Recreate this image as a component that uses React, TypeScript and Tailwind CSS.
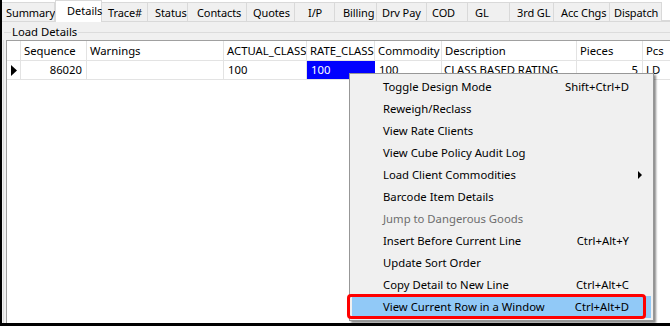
import React from "react";

const tabs = [
  { label: "Summary", w: 53, pl: 4 },
  { label: "Details", w: 47, pl: 11, sel: true },
  { label: "Trace#", w: 46, pl: 6 },
  { label: "Status", w: 40, pl: 7 },
  { label: "Contacts", w: 59, pl: 9 },
  { label: "Quotes", w: 48, pl: 6 },
  { label: "I/P", w: 40, pl: 13 },
  { label: "Billing", w: 42, pl: 8 },
  { label: "Drv Pay", w: 50, pl: 5 },
  { label: "COD", w: 41, pl: 5 },
  { label: "GL", w: 42, pl: 7 },
  { label: "3rd GL", w: 44, pl: 7 },
  { label: "Acc Chgs", w: 56, pl: 7 },
  { label: "Dispatch", w: 52, pl: 4 },
];

const cols = [
  { label: "", w: 14 },
  { label: "Sequence", w: 66 },
  { label: "Warnings", w: 137 },
  { label: "ACTUAL_CLASS", w: 83 },
  { label: "RATE_CLASS", w: 68 },
  { label: "Commodity", w: 67 },
  { label: "Description", w: 135 },
  { label: "Pieces", w: 66 },
  { label: "Pcs", w: 40 },
];

const menu: { label: string; sc?: string; sub?: boolean; dis?: boolean; hl?: boolean }[] = [
  { label: "Toggle Design Mode", sc: "Shift+Ctrl+D" },
  { label: "Reweigh/Reclass" },
  { label: "View Rate Clients" },
  { label: "View Cube Policy Audit Log" },
  { label: "Load Client Commodities", sub: true },
  { label: "Barcode Item Details" },
  { label: "Jump to Dangerous Goods", dis: true },
  { label: "Insert Before Current Line", sc: "Ctrl+Alt+Y" },
  { label: "Update Sort Order" },
  { label: "Copy Detail to New Line", sc: "Ctrl+Alt+C" },
  { label: "View Current Row in a Window", sc: "Ctrl+Alt+D", hl: true },
];

export default function App() {
  return (
    <div
      className="relative w-[670px] h-[326px] overflow-hidden bg-white text-[11.3px] text-black"
      style={{ fontFamily: '"Noto Sans", "Open Sans", sans-serif' }}
    >
      <div className="flex h-full flex-col border-b-[3px] border-l-[2px] border-black">
        {/* tab strip */}
        <div className="flex h-[21px] shrink-0 items-end bg-white text-[11px]">
          {tabs.map((t) =>
            t.sel ? (
              <div
                key={t.label}
                className="relative z-10 -mb-px flex h-[22px] shrink-0 items-start whitespace-nowrap border-x border-t border-[#d9d9d9] bg-white pt-[3px] leading-[14px]"
                style={{ width: t.w, paddingLeft: t.pl }}
              >
                {t.label}
              </div>
            ) : (
              <div
                key={t.label}
                className="flex h-[19px] shrink-0 items-center whitespace-nowrap border-r border-t border-[#d9d9d9] bg-[#f0f0f0] pt-[1px] leading-[14px] tracking-[-0.1px]"
                style={{ width: t.w, paddingLeft: t.pl }}
              >
                {t.label}
              </div>
            )
          )}
          <div className="h-[19px] flex-1 border-b border-[#d9d9d9]" />
        </div>
        {/* group box */}
        <div className="flex flex-1 flex-col border-t border-[#d9d9d9] bg-[#f0f0f0] pl-[1px]">
          <div className="relative h-[18px] shrink-0">
            <div className="absolute left-[1px] right-0 top-[10px] border-t border-[#dcdcdc]" />
            <span className="absolute left-[8px] top-[3px] bg-[#f0f0f0] px-[1px] leading-[14px]">Load Details</span>
          </div>
          <div className="flex flex-1 border-l border-[#dcdcdc] pl-[2px]">
            <div className="flex flex-1 flex-col border-l border-t border-[#a0a0a0] bg-white">
              {/* header */}
              <div className="flex h-[20px] shrink-0 border-b border-[#e3e3e3]">
                {cols.map((c, i) => (
                  <div
                    key={i}
                    className="flex shrink-0 items-center overflow-hidden whitespace-nowrap border-r border-[#e3e3e3] pl-[3px] leading-[14px]"
                    style={{ width: c.w }}
                  >
                    {c.label}
                  </div>
                ))}
              </div>
              {/* row */}
              <div className="flex h-[19px] shrink-0 border-b border-[#e3e3e3]">
                <div className="flex w-[14px] shrink-0 items-center justify-center border-r border-[#e3e3e3]">
                  <svg width="6" height="11" viewBox="0 0 6 11">
                    <path d="M0 0 L6 5.5 L0 11 Z" fill="#000" />
                  </svg>
                </div>
                <div className="flex w-[66px] shrink-0 items-center justify-end border-r border-[#e3e3e3] pr-[4px]">86020</div>
                <div className="w-[137px] shrink-0 border-r border-[#e3e3e3]" />
                <div className="flex w-[83px] shrink-0 items-center border-r border-[#e3e3e3] pl-[4px]">100</div>
                <div className="flex w-[68px] shrink-0 items-center bg-[#0000ff] pl-[4px] text-white">100</div>
                <div className="flex w-[67px] shrink-0 items-center border-r border-[#e3e3e3] pl-[4px]">100</div>
                <div className="flex w-[135px] shrink-0 items-center overflow-hidden whitespace-nowrap border-r border-[#e3e3e3] pl-[2px]">CLASS BASED RATING</div>
                <div className="flex w-[66px] shrink-0 items-center justify-end border-r border-[#e3e3e3] pr-[4px]">5</div>
                <div className="flex w-[40px] shrink-0 items-center pl-[3px]">LD</div>
              </div>
            </div>
          </div>
        </div>
      </div>

      {/* context menu */}
      <div className="absolute left-[349px] top-[73px] w-[305px] border border-[#979797] bg-[#f0f0f0] py-[2px] shadow-[2px_2px_2px_rgba(0,0,0,0.45)]">
        {menu.map((m) => (
          <div
            key={m.label}
            className={`relative mx-[2px] flex h-[22px] items-center pl-[31px] pr-[22px] ${m.hl ? "bg-[#91c9f7]" : ""} ${m.dis ? "text-[#6d6d6d]" : ""}`}
          >
            <span className="flex-1 whitespace-nowrap">{m.label}</span>
            {m.sc && <span className="whitespace-nowrap">{m.sc}</span>}
            {m.sub && (
              <svg className="absolute right-[9px] top-[7px]" width="4" height="8" viewBox="0 0 4 8">
                <path d="M0 0 L4 4 L0 8 Z" fill="#000" />
              </svg>
            )}
          </div>
        ))}
      </div>

      {/* red annotation */}
      <div className="absolute left-[347px] top-[294px] h-[25px] w-[299px] rounded-[4px] border-[3px] border-[#ff0000]" />
    </div>
  );
}
